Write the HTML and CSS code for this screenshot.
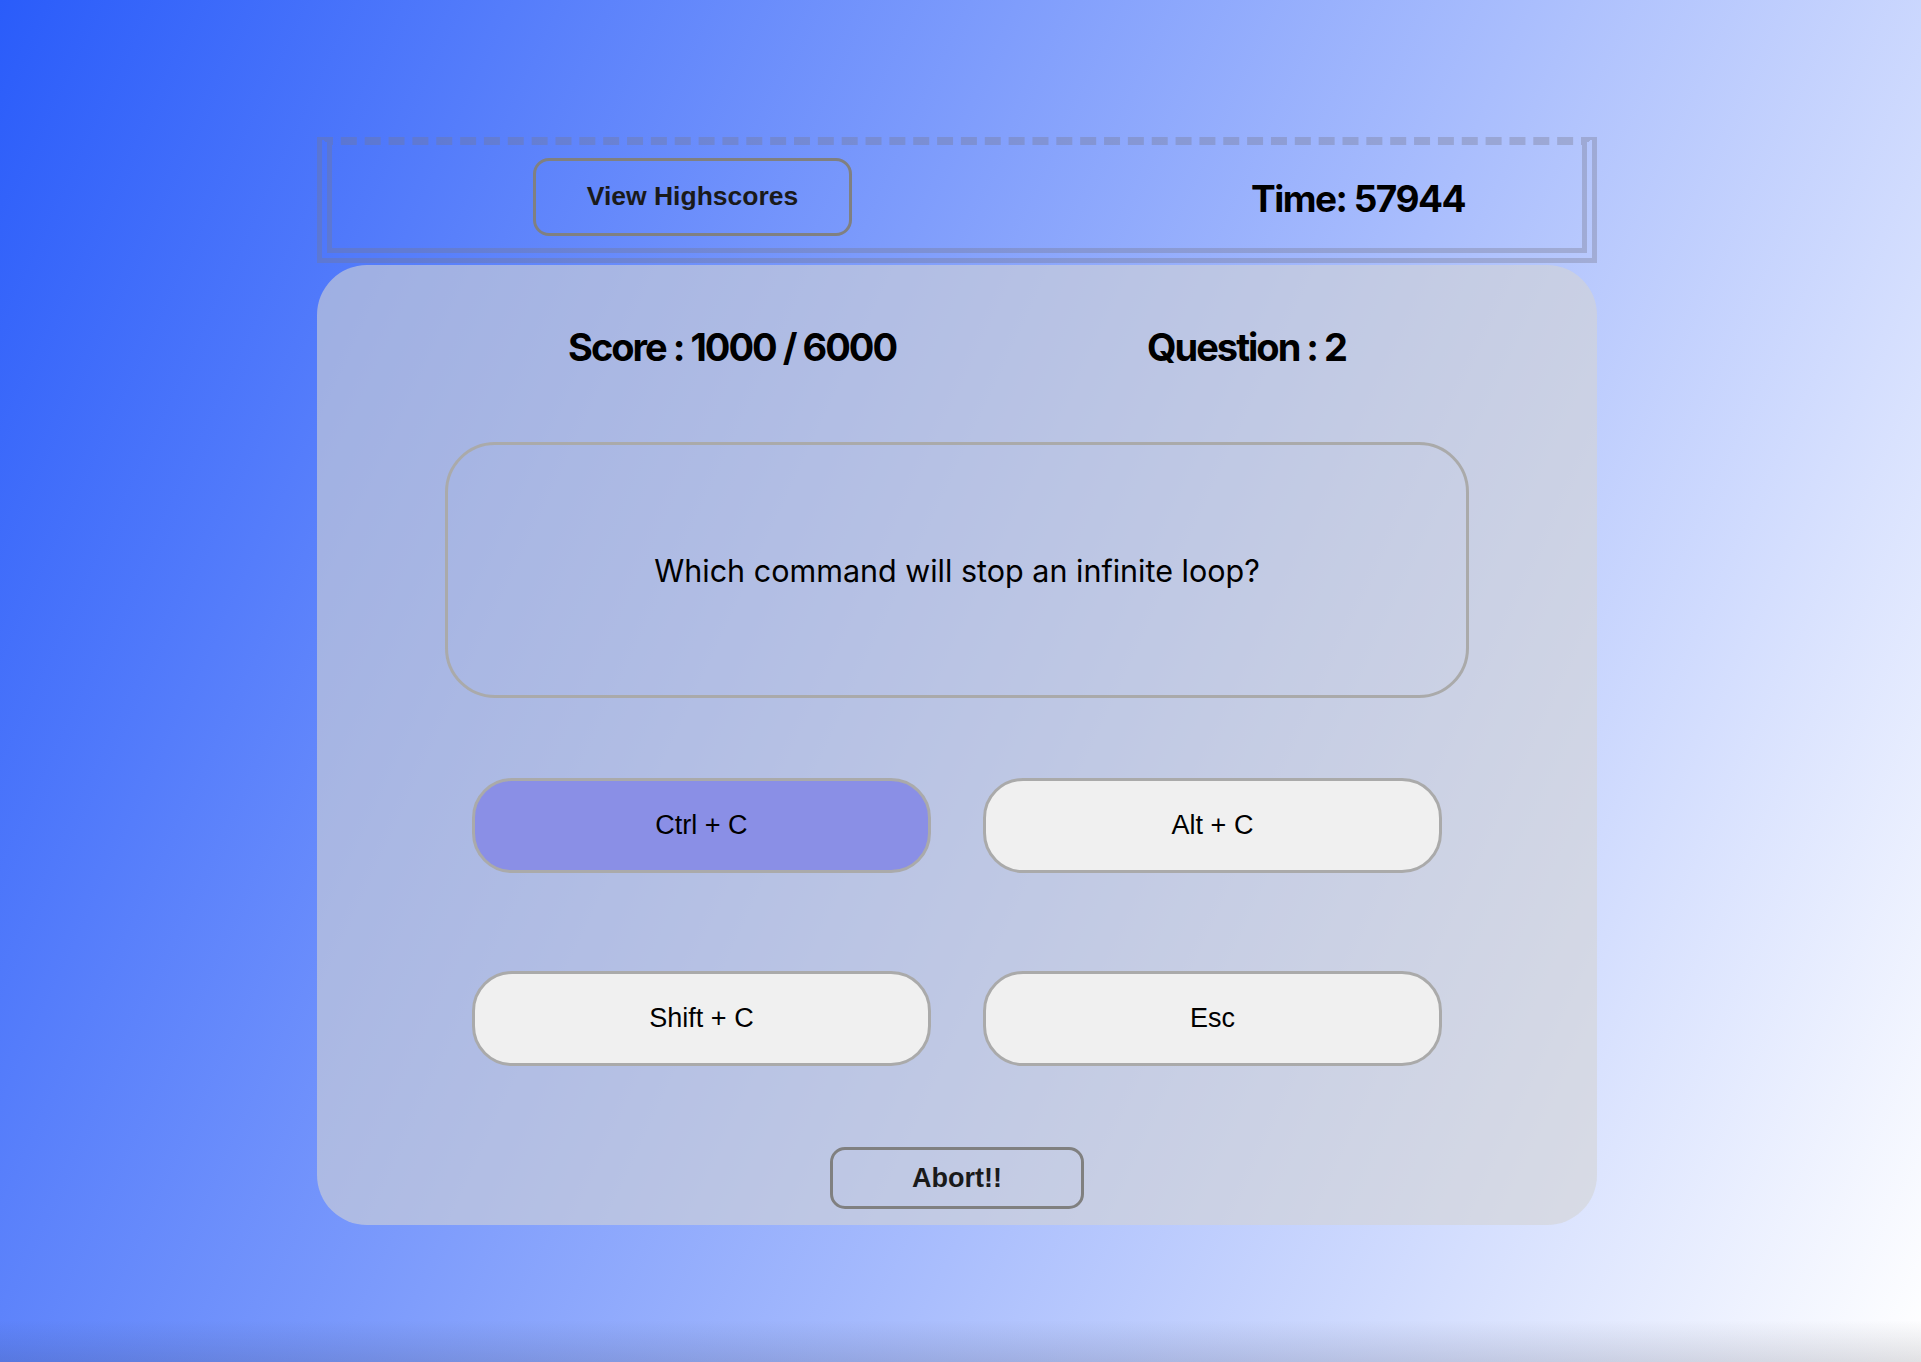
FILE: index.html
```html
<!DOCTYPE html>
<html lang="en">
<head>
<meta charset="utf-8">
<title>Quiz</title>
<link rel="stylesheet" href="styles.css">
</head>
<body>
<div class="page">
  <header class="topbar">
    <button class="btn-hs">View Highscores</button>
    <div class="time">Time: 57944</div>
  </header>
  <main class="card">
    <div class="stats">
      <div class="stat">Score : 1000 / 6000</div>
      <div class="stat">Question : 2</div>
    </div>
    <div class="question">Which command will stop an infinite loop?</div>
    <div class="answers">
      <button class="answer answer-selected">Ctrl + C</button>
      <button class="answer">Alt + C</button>
      <button class="answer">Shift + C</button>
      <button class="answer">Esc</button>
    </div>
    <button class="abort">Abort!!</button>
  </main>
</div>
</body>
</html>
```

FILE: styles.css
```css
html, body {
  margin: 0;
  padding: 0;
  height: 100%;
}

body {
  min-height: 100vh;
  background:
    linear-gradient(to bottom, rgba(0,0,0,0) calc(100% - 42px), rgba(40,40,60,0.14) 100%),
    linear-gradient(115deg, #2a5cfa 0%, #ffffff 100%);
  font-family: "Liberation Sans", Arial, sans-serif;
  overflow: hidden;
}

.page {
  width: 1280px;
  margin-left: 317px;
  padding-top: 137px;
}

.topbar {
  box-sizing: border-box;
  height: 126px;
  border-top: 8px dashed rgba(120,120,140,0.35);
  border-left: 15px double rgba(120,120,140,0.35);
  border-right: 15px double rgba(120,120,140,0.35);
  border-bottom: 15px double rgba(120,120,140,0.35);
  display: flex;
  align-items: center;
}

.btn-hs {
  margin-left: 201px;
  width: 319px;
  height: 78px;
  border: 3px solid #808080;
  border-radius: 16px;
  background: transparent;
  font-family: "Liberation Sans", Arial, sans-serif;
  font-weight: 700;
  font-size: 26.5px;
  color: #1a1a1a;
  padding: 0;
}

.time {
  margin-left: 399px;
  padding-top: 4px;
  font-family: Inter, "Liberation Sans", sans-serif;
  font-weight: 700;
  font-size: 37px;
  letter-spacing: -1.5px;
  color: #000;
}

.card {
  box-sizing: border-box;
  margin-top: 2px;
  height: 960px;
  border-radius: 50px;
  background: rgba(211,211,211,0.6);
  padding: 60px 0 16px;
  display: flex;
  flex-direction: column;
  align-items: center;
}

.stats {
  width: 100%;
  display: flex;
  justify-content: space-evenly;
  height: 44px;
  align-items: center;
}

.stat {
  font-family: Inter, "Liberation Sans", sans-serif;
  font-weight: 700;
  font-size: 38px;
  letter-spacing: -2px;
  color: #000;
}

.question {
  box-sizing: border-box;
  margin-top: 73px;
  width: 1024px;
  height: 256px;
  border: 3px solid #aaaaaa;
  border-radius: 50px;
  display: flex;
  align-items: center;
  justify-content: center;
  font-family: Inter, "Liberation Sans", sans-serif;
  font-size: 30.5px;
  color: #000;
}

.answers {
  margin-top: 80px;
  display: grid;
  grid-template-columns: 459px 459px;
  grid-auto-rows: 95px;
  column-gap: 52px;
  row-gap: 98px;
}

.answer {
  box-sizing: border-box;
  border: 3px solid #aaaaaa;
  border-radius: 40px;
  background: #f0f0f0;
  font-family: "Liberation Sans", Arial, sans-serif;
  font-size: 27px;
  color: #000;
  padding: 0;
}

.answer-selected {
  background: #8a8fe6;
}

.abort {
  box-sizing: border-box;
  margin-top: 81px;
  width: 254px;
  height: 62px;
  border: 3px solid #808080;
  border-radius: 15px;
  background: transparent;
  font-family: "Liberation Sans", Arial, sans-serif;
  font-weight: 700;
  font-size: 27px;
  color: #1a1a1a;
  padding: 0;
}
```
